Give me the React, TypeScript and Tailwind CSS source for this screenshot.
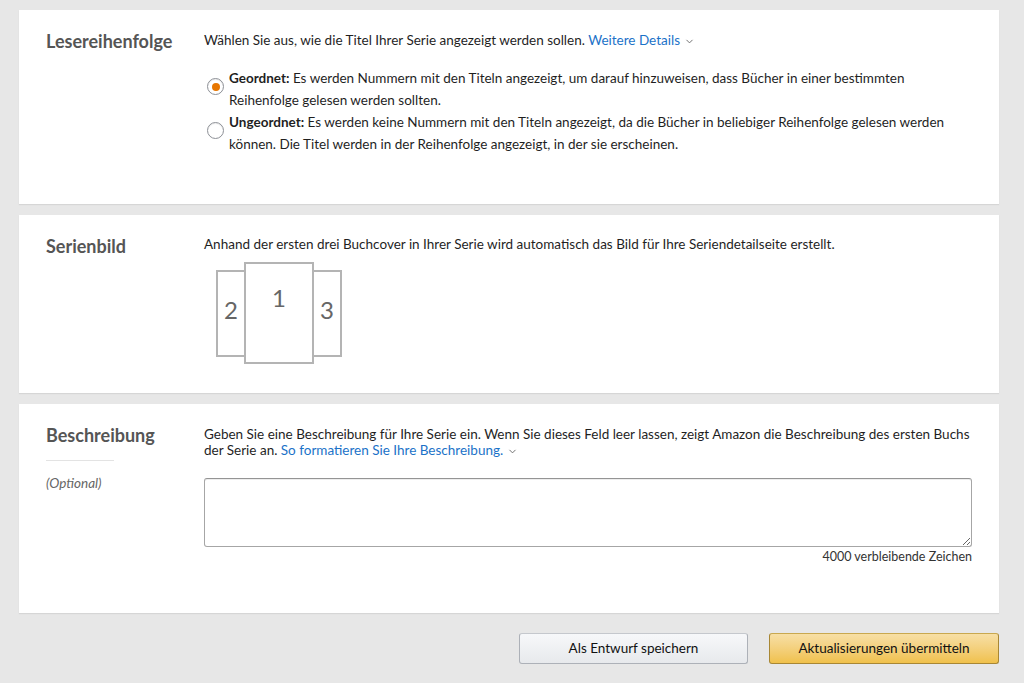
import { ChevronDown } from 'lucide-react';

function Radio({ checked }: { checked?: boolean }) {
  return (
    <span className="flex h-[17px] w-[17px] shrink-0 items-center justify-center rounded-full border border-[#8d9096] bg-white shadow-[inset_0_1px_1px_rgba(0,0,0,0.08)]">
      {checked && <span className="h-[8px] w-[8px] rounded-full bg-[#e77600]" />}
    </span>
  );
}

function Book({ n, tall }: { n: number; tall?: boolean }) {
  return (
    <div
      className={
        tall
          ? 'relative z-10 -mx-[2px] flex h-[102px] w-[70px] items-start justify-center border-2 border-[#b4b4b4] bg-white pt-[19px] text-[24px] leading-[30px] text-[#666]'
          : 'flex h-[87px] w-[30px] items-center justify-center border-2 border-[#b4b4b4] bg-white pb-[7px] text-[24px] leading-[30px] text-[#666]'
      }
    >
      {n}
    </div>
  );
}

function Card({ children, className }: { children: React.ReactNode; className?: string }) {
  return (
    <section className={'flex bg-white px-[27px] shadow-[0_1px_1px_#d6d6d6] ' + (className ?? '')}>
      {children}
    </section>
  );
}

export default function App() {
  return (
    <div className="min-h-[683px] bg-[#e7e7e7] pl-[19px] pr-[25px] pt-[10px] pb-[20px] text-[13.5px] text-[#1f1f1f] [font-family:Lato,'Liberation_Sans',sans-serif]">
      <div className="flex flex-col gap-[11px]">
        <Card className="h-[194px] pt-[18px]">
          <h2 className="w-[158px] shrink-0 text-[18px] font-bold text-[#555]">Lesereihenfolge</h2>
          <div className="flex-1">
            <p className="mt-[1px] leading-[22px]">
              Wählen Sie aus, wie die Titel Ihrer Serie angezeigt werden sollen.{' '}
              <a className="text-[#1b72c8]" href="#">
                Weitere Details
                <ChevronDown size={11} className="ml-1 inline-block text-[#666]" />
              </a>
            </p>
            <div className="mt-[16px] flex flex-col">
              <label className="flex items-start gap-[5px] pl-[3px]">
                <span className="mt-[11px]"><Radio checked /></span>
                <span className="leading-[22px]">
                  <b>Geordnet:</b> Es werden Nummern mit den Titeln angezeigt, um darauf hinzuweisen, dass Bücher in einer bestimmten
                  <br />
                  Reihenfolge gelesen werden sollten.
                </span>
              </label>
              <label className="flex items-start gap-[5px] pl-[3px]">
                <span className="mt-[11px]"><Radio /></span>
                <span className="leading-[22px]">
                  <b>Ungeordnet:</b> Es werden keine Nummern mit den Titeln angezeigt, da die Bücher in beliebiger Reihenfolge gelesen werden
                  <br />
                  können. Die Titel werden in der Reihenfolge angezeigt, in der sie erscheinen.
                </span>
              </label>
            </div>
          </div>
        </Card>

        <Card className="h-[178px] pt-[18px]">
          <h2 className="w-[158px] shrink-0 text-[18px] font-bold text-[#555]">Serienbild</h2>
          <div className="flex-1">
            <p className="leading-[22px]">
              Anhand der ersten drei Buchcover in Ihrer Serie wird automatisch das Bild für Ihre Seriendetailseite erstellt.
            </p>
            <div className="mt-[7px] ml-[12px] flex items-center">
              <Book n={2} />
              <Book n={1} tall />
              <Book n={3} />
            </div>
          </div>
        </Card>

        <Card className="h-[209px] pt-[18px]">
          <div className="w-[158px] shrink-0">
            <h2 className="text-[18px] font-bold text-[#555]">Beschreibung</h2>
            <hr className="mt-[11px] w-[68px] border-[#e3e3e3]" />
            <p className="mt-[12px] italic text-[#666]">(Optional)</p>
          </div>
          <div className="flex-1">
            <p className="mt-[4px] leading-[16px]">
              Geben Sie eine Beschreibung für Ihre Serie ein. Wenn Sie dieses Feld leer lassen, zeigt Amazon die Beschreibung des ersten Buchs
              <br />
              der Serie an.{' '}
              <a className="text-[#1b72c8]" href="#">
                So formatieren Sie Ihre Beschreibung.
                <ChevronDown size={11} className="ml-1 inline-block text-[#666]" />
              </a>
            </p>
            <textarea className="mt-[20px] block h-[69px] w-full rounded-[3px] border border-[#a6a6a6] border-t-[#949494] shadow-[inset_0_1px_0_rgba(0,0,0,0.07)]" />
            <p className="mt-[1px] text-right text-[12.5px] text-[#333]">4000 verbleibende Zeichen</p>
          </div>
        </Card>
      </div>

      <div className="mt-[20px] flex justify-end gap-[21px]">
        <button className="h-[31px] w-[229px] rounded-[3px] border border-[#adb1b8] border-t-[#c5c8cd] bg-gradient-to-b from-[#f7f8fa] to-[#e7e9ec] text-[13.5px] text-[#111]">
          Als Entwurf speichern
        </button>
        <button className="h-[31px] w-[230px] rounded-[3px] border border-[#a88734] border-t-[#c9a84f] bg-gradient-to-b from-[#f7dfa5] to-[#f0c14b] text-[13.5px] text-[#111]">
          Aktualisierungen übermitteln
        </button>
      </div>
    </div>
  );
}
